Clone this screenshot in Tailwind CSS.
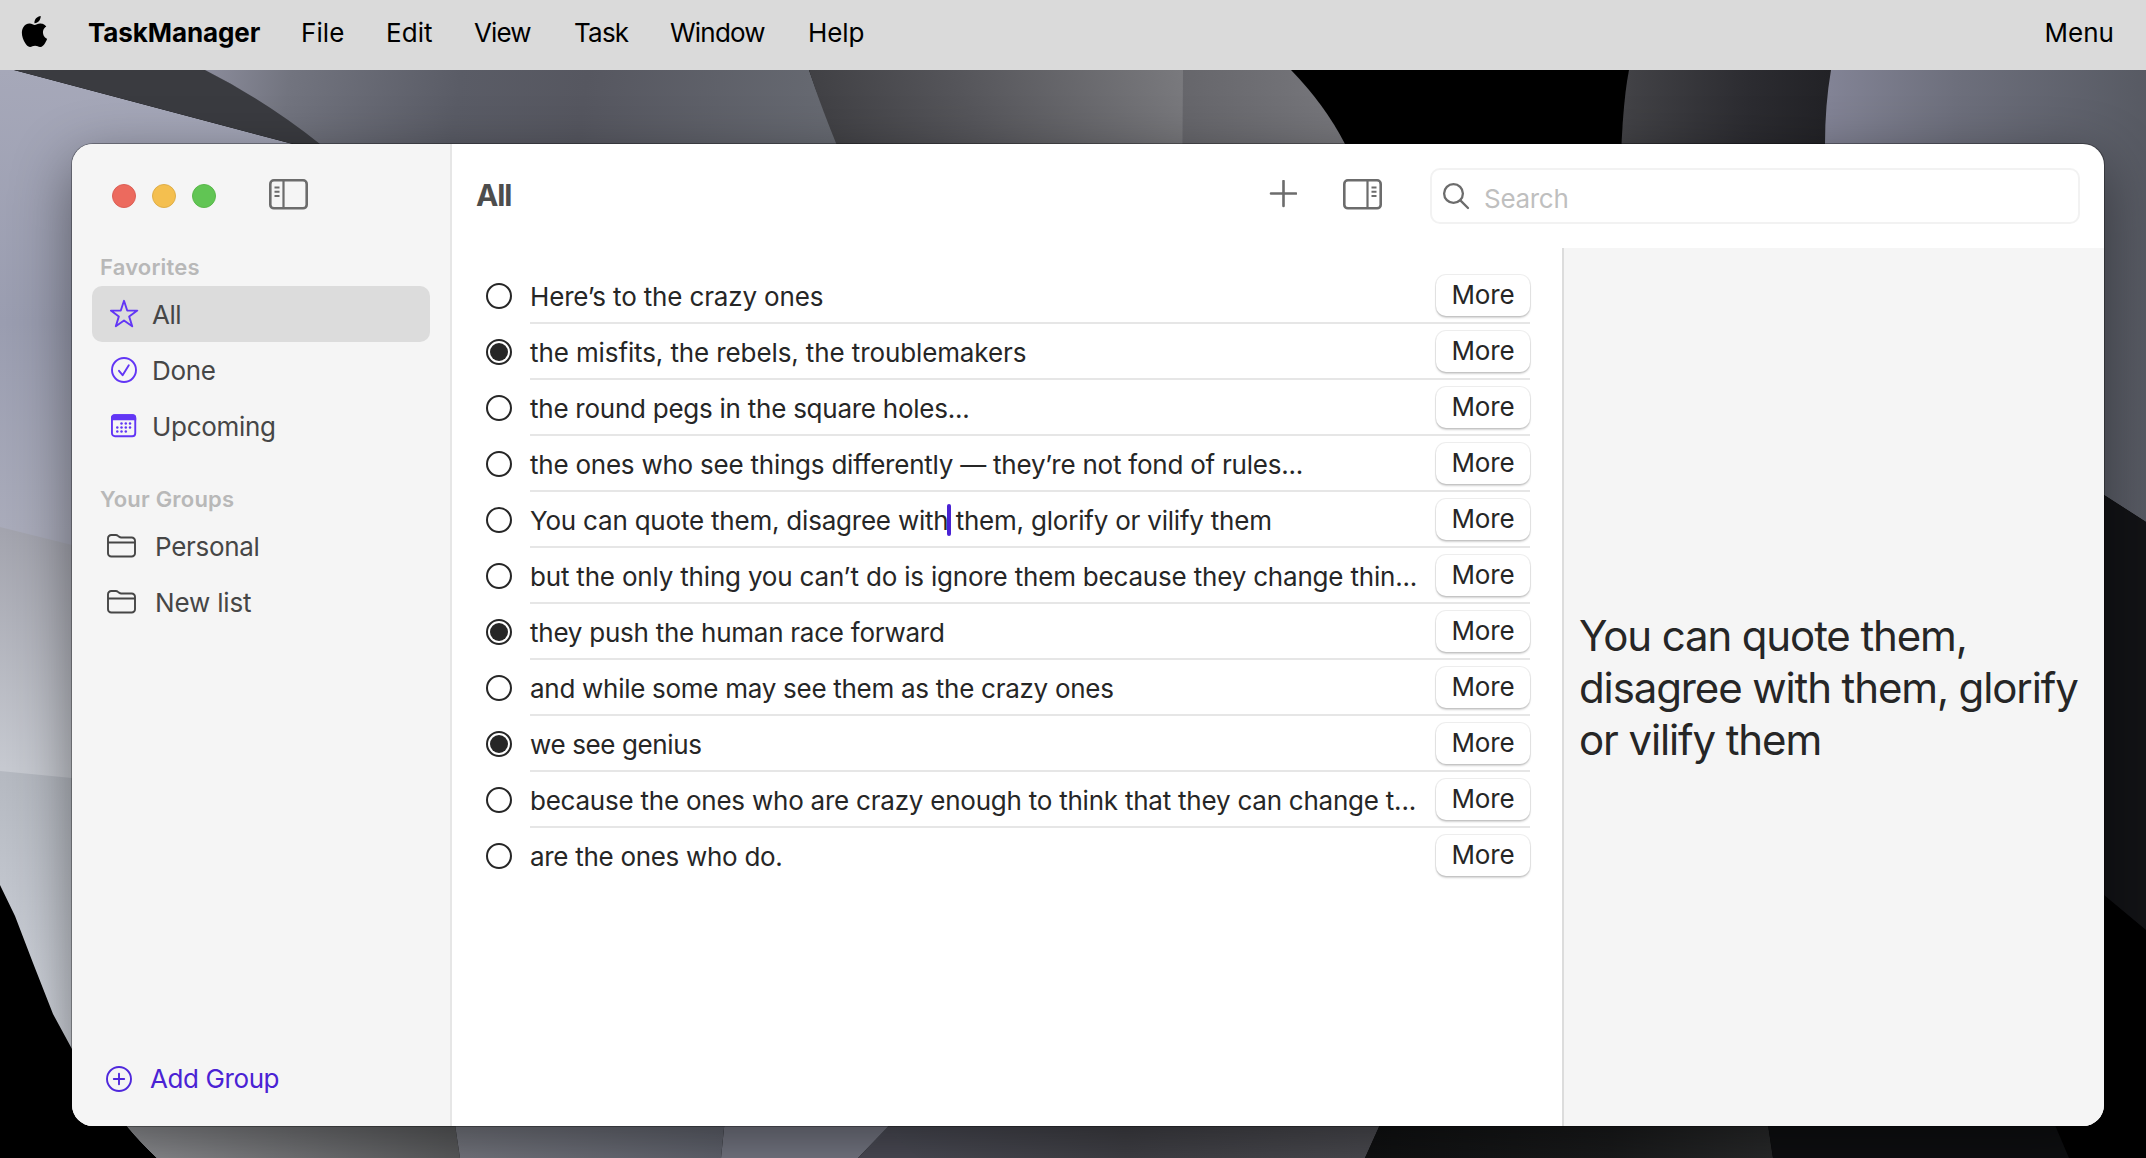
<!DOCTYPE html>
<html lang="en">
<head>
<meta charset="utf-8">
<title>TaskManager</title>
<script src="https://cdn.jsdelivr.net/npm/@tailwindcss/browser@4"></script>
</head>
<body class="relative flex h-[1158px] w-[2146px] flex-col overflow-hidden bg-black font-['Inter',sans-serif] text-[26px] leading-8 tracking-[-0.18px] text-[#262626]">

<!-- Desktop wallpaper -->
<svg class="absolute inset-0" width="2146" height="1158" viewBox="0 0 2146 1158" aria-hidden="true">
  <defs>
    <linearGradient id="lav" x1="0" y1="70" x2="0" y2="530" gradientUnits="userSpaceOnUse"><stop offset="0" stop-color="#a6a8b9"/><stop offset=".55" stop-color="#9a9db0"/><stop offset="1" stop-color="#a9abba"/></linearGradient>
    <linearGradient id="mid" x1="0" y1="530" x2="0" y2="775" gradientUnits="userSpaceOnUse"><stop offset="0" stop-color="#a3a4ae"/><stop offset="1" stop-color="#c7cad1"/></linearGradient>
    <linearGradient id="low" x1="0" y1="775" x2="0" y2="1050" gradientUnits="userSpaceOnUse"><stop offset="0" stop-color="#b5b9c1"/><stop offset="1" stop-color="#d2d6de"/></linearGradient>
    <linearGradient id="slate" x1="210" y1="60" x2="830" y2="150" gradientUnits="userSpaceOnUse"><stop offset="0" stop-color="#8a8b9a"/><stop offset=".13" stop-color="#72747f"/><stop offset=".4" stop-color="#5a5c66"/><stop offset=".6" stop-color="#565760"/><stop offset="1" stop-color="#676a72"/></linearGradient>
    <linearGradient id="char" x1="820" y1="144" x2="1180" y2="70" gradientUnits="userSpaceOnUse"><stop offset="0" stop-color="#404044"/><stop offset=".4" stop-color="#55555a"/><stop offset="1" stop-color="#79797d"/></linearGradient>
    <linearGradient id="fold" x1="1182" y1="0" x2="1345" y2="0" gradientUnits="userSpaceOnUse"><stop offset="0" stop-color="#66666b"/><stop offset="1" stop-color="#77777c"/></linearGradient>
    <linearGradient id="ink" x1="1622" y1="0" x2="1830" y2="0" gradientUnits="userSpaceOnUse"><stop offset="0" stop-color="#434347"/><stop offset=".6" stop-color="#2c2c31"/><stop offset="1" stop-color="#222226"/></linearGradient>
    <linearGradient id="haze" x1="1830" y1="0" x2="2146" y2="0" gradientUnits="userSpaceOnUse"><stop offset="0" stop-color="#828395"/><stop offset=".4" stop-color="#6d6f7c"/><stop offset="1" stop-color="#575a63"/></linearGradient>
    <linearGradient id="b1" x1="126" y1="0" x2="460" y2="0" gradientUnits="userSpaceOnUse"><stop offset="0" stop-color="#97989c"/><stop offset="1" stop-color="#5f6062"/></linearGradient>
    <linearGradient id="b2" x1="455" y1="0" x2="725" y2="0" gradientUnits="userSpaceOnUse"><stop offset="0" stop-color="#7d7f88"/><stop offset="1" stop-color="#666974"/></linearGradient>
    <linearGradient id="b3" x1="870" y1="0" x2="1382" y2="0" gradientUnits="userSpaceOnUse"><stop offset="0" stop-color="#50515c"/><stop offset=".5" stop-color="#44444a"/><stop offset="1" stop-color="#505056"/></linearGradient>
    <linearGradient id="b4" x1="1370" y1="0" x2="1770" y2="0" gradientUnits="userSpaceOnUse"><stop offset="0" stop-color="#111213"/><stop offset=".6" stop-color="#1b1c1d"/><stop offset="1" stop-color="#2b2c2d"/></linearGradient>
  </defs>
  <rect width="2146" height="1158" fill="#000"/>
  <path d="M0 66 14 70 293 144 293 600H0z" fill="url(#lav)"/>
  <path d="M0 527 72 545H300V800H0z" fill="url(#mid)"/>
  <path d="M0 771 72 778H300V1158H157Q138 1140 127 1126L90 1068L72 1049L53 1014L33 963L15 916L0 885z" fill="url(#low)"/>
  <path d="M14 70H206L340 144V160H350L293 144z" fill="#3a3b40"/>
  <path d="M205 70H809Q822 110 843 144V200H385L320 144Q266 101 205 70z" fill="url(#slate)"/>
  <path d="M809 70H1184V200H860Q825 120 809 70z" fill="url(#char)"/>
  <path d="M1183 70H1291Q1325 105 1345 144V200H1182z" fill="url(#fold)"/>
  <path d="M1629 70H1831V200H1620Q1621 110 1629 70z" fill="url(#ink)"/>
  <path d="M1831 70H2146V522L2104 495H1825V144Q1825 105 1831 70z" fill="url(#haze)"/>
  <path d="M2080 480 2104 495 2146 522V930L2104 895 2080 880z" fill="#121316"/>
  <path d="M120 1118H454L460 1158H157Q138 1140 120 1118z" fill="url(#b1)"/>
  <path d="M454 1118H725L721 1158H460z" fill="url(#b2)"/>
  <path d="M725 1118H897L858 1158H721z" fill="#7b7d8a"/>
  <path d="M896 1118H1383L1365 1158H858z" fill="url(#b3)"/>
  <path d="M889 1132 920 1158H858z" fill="#4f4f5a"/>
  <path d="M1383 1118H1767L1773 1158H1365z" fill="url(#b4)"/>
  <path d="M1767 1118H2052L2069 1158H1773z" fill="#0f1012"/>
</svg>

<!-- Menu bar -->
<header class="relative flex h-[70px] shrink-0 items-center bg-[#dadada] pr-[32px] pb-[4px] pl-[19px] text-black">
  <svg class="mr-[38px] -mt-[3px] shrink-0" width="31" height="31" viewBox="0 0 24 24" fill="#000"><path d="M12.152 6.896c-.948 0-2.415-1.078-3.96-1.04-2.04.027-3.91 1.183-4.961 3.014-2.117 3.675-.546 9.103 1.519 12.09 1.013 1.454 2.208 3.09 3.792 3.039 1.52-.065 2.09-.987 3.935-.987 1.831 0 2.35.987 3.96.948 1.637-.026 2.676-1.48 3.676-2.948 1.156-1.688 1.636-3.325 1.662-3.415-.039-.013-3.182-1.221-3.22-4.857-.026-3.04 2.48-4.494 2.597-4.559-1.429-2.09-3.623-2.324-4.39-2.376-2-.156-3.675 1.09-4.61 1.09zM15.53 3.83c.843-1.012 1.4-2.427 1.245-3.83-1.207.052-2.662.805-3.532 1.818-.78.896-1.454 2.338-1.273 3.714 1.338.104 2.715-.688 3.559-1.701"/></svg>
  <nav class="flex">
    <span class="w-[213px] font-bold tracking-[-0.1px]">TaskManager</span>
    <span class="w-[85px] tracking-[0.1px]">File</span>
    <span class="w-[88px] tracking-[0.05px]">Edit</span>
    <span class="w-[100px] tracking-[-0.9px]">View</span>
    <span class="w-[96px] tracking-[-0.8px]">Task</span>
    <span class="w-[138px] tracking-[-0.8px]">Window</span>
    <span class="tracking-[-0.1px]">Help</span>
  </nav>
  <span class="ml-auto tracking-normal">Menu</span>
</header>

<!-- Application window -->
<main class="relative mt-[74px] ml-[72px] flex h-[982px] w-[2032px] rounded-[21px] bg-white shadow-[0_0_0_1px_rgba(0,0,0,0.3),0_18px_60px_rgba(0,0,0,0.45)]">

  <aside class="flex w-[380px] shrink-0 flex-col rounded-l-[21px] border-r-2 border-[#e6e6e6] bg-[#f5f5f5] px-5 text-[#464646]">
    <div class="mt-[36px] flex h-[32px] items-center pl-5">
      <span class="mr-4 size-6 rounded-full border border-[#dc5f56] bg-[#ec6a5e]"></span>
      <span class="mr-4 size-6 rounded-full border border-[#dfae48] bg-[#f4bf4f]"></span>
      <span class="mr-[53px] size-6 rounded-full border border-[#59b84a] bg-[#61c554]"></span>
      <svg class="-mt-[4px]" width="39" height="31" viewBox="0 0 39 31" fill="none" stroke="#6c6c6c"><rect x="1.3" y="1.3" width="36.4" height="28" rx="3.6" stroke-width="2.6"/><path d="M14.5 1v28.500" stroke-width="2.200"/><path d="M5.500 8.500h5M5.500 12.800h5M5.500 17h5" stroke-width="2"/></svg>
    </div>
    <h2 class="mt-[39px] ml-2 h-8 text-[22px] font-semibold tracking-[0.18px] text-[#b8b8b8]">Favorites</h2>
    <ul class="mt-[3px]">
      <li class="flex h-14 items-center rounded-[10px] bg-[#dcdcdc] pl-[18px]">
        <svg class="mr-3 shrink-0" width="30" height="30" viewBox="0 0 30 30" fill="none" stroke="#6236f5" stroke-width="1.900" stroke-linejoin="round"><path d="M14.000 1.800 17.200 11.500 27.300 11.600 19.200 17.600 22.200 27.300 14.000 21.500 5.800 27.300 8.800 17.600 0.900 11.600 10.800 11.500z"/></svg>
        <span class="mt-[2px] tracking-[-0.5px]">All</span>
      </li>
      <li class="flex h-14 items-center pl-[18px]">
        <svg class="mr-3 shrink-0" width="30" height="30" viewBox="0 0 30 30" fill="none" stroke="#6236f5" stroke-width="1.900" stroke-linecap="round" stroke-linejoin="round"><circle cx="14" cy="15" r="12"/><path d="M9.000 15.800 12.600 20.200 18.800 10.200"/></svg>
        <span class="mt-[2px] tracking-[-0.3px]">Done</span>
      </li>
      <li class="flex h-14 items-center pl-[18px]">
        <svg class="mr-3 shrink-0" width="30" height="30" viewBox="0 0 30 30"><rect x="1.950" y="4.200" width="23.300" height="21" rx="3" fill="none" stroke="#6236f5" stroke-width="1.900"/><path d="M1 9.200V6.800a3.500 3.500 0 0 1 3.500-3.500h18.200a3.500 3.500 0 0 1 3.500 3.500v2.400z" fill="#6236f5"/><g fill="#6236f5"><circle cx="11.500" cy="12.600" r="1.250"/><circle cx="15.800" cy="12.600" r="1.250"/><circle cx="20" cy="12.600" r="1.250"/><circle cx="7.300" cy="16.600" r="1.250"/><circle cx="11.500" cy="16.600" r="1.250"/><circle cx="15.800" cy="16.600" r="1.250"/><circle cx="20" cy="16.600" r="1.250"/><circle cx="7.300" cy="20.600" r="1.250"/><circle cx="11.500" cy="20.600" r="1.250"/><circle cx="15.800" cy="20.600" r="1.250"/></g></svg>
        <span class="mt-[2px] tracking-[-0.3px]">Upcoming</span>
      </li>
    </ul>
    <h2 class="mt-[29px] ml-2 h-8 text-[22px] font-semibold tracking-[0.2px] text-[#b8b8b8]">Your Groups</h2>
    <ul class="mt-[3px]">
      <li class="flex h-14 items-center pl-[15px]">
        <svg class="mr-[18px] shrink-0" width="30" height="24" viewBox="0 0 30 24" fill="none" stroke="#464646" stroke-width="1.900" stroke-linejoin="round"><path d="M1 4.300A3.300 3.300 0 0 1 4.300 1h4.500c1 0 1.600.3 2.300.9l1.100.9c.6.500 1.200.700 2 .7h10.500A3.300 3.300 0 0 1 28 6.800v12.400a3.300 3.300 0 0 1-3.300 3.300H4.300A3.300 3.300 0 0 1 1 19.200zM1 8.500h27"/></svg>
        <span class="mt-[2px] tracking-[-0.3px]">Personal</span>
      </li>
      <li class="flex h-14 items-center pl-[15px]">
        <svg class="mr-[18px] shrink-0" width="30" height="24" viewBox="0 0 30 24" fill="none" stroke="#464646" stroke-width="1.900" stroke-linejoin="round"><path d="M1 4.300A3.300 3.300 0 0 1 4.300 1h4.500c1 0 1.600.3 2.300.9l1.100.9c.6.500 1.200.700 2 .7h10.500A3.300 3.300 0 0 1 28 6.800v12.400a3.300 3.300 0 0 1-3.300 3.300H4.300A3.300 3.300 0 0 1 1 19.200zM1 8.500h27"/></svg>
        <span class="mt-[2px] tracking-[-0.17px]">New list</span>
      </li>
    </ul>
    <button class="mt-auto mb-[31px] flex items-center gap-[17px] pl-[13px] text-left text-[#4a22d4]">
      <svg width="28" height="28" viewBox="0 0 28 28" fill="none" stroke="#4f28dc" stroke-width="1.900" stroke-linecap="round"><circle cx="14" cy="14" r="12"/><path d="M14 8.800v10.400M8.800 14h10.400"/></svg>
      <span class="tracking-[-0.4px]">Add Group</span>
    </button>
  </aside>

  <div class="flex min-w-0 flex-1 flex-col">
    <div class="flex h-[104px] shrink-0 items-center pr-6 pl-6">
      <h1 class="-mt-[3px] text-[30px] font-bold tracking-[-1.2px] text-[#4d4d4d]">All</h1>
      <svg class="-mt-[4px] ml-auto mr-[46px]" width="28" height="28" viewBox="0 0 28 28" stroke="#6c6c6c" stroke-width="2.600" stroke-linecap="round"><path d="M14.500 1v25M2 13.500h25"/></svg>
      <svg class="-mt-[4px] mr-[48px]" width="39" height="31" viewBox="0 0 39 31" fill="none" stroke="#6c6c6c"><rect x="1.300" y="1.300" width="36.400" height="28" rx="3.600" stroke-width="2.600"/><path d="M24.500 1v28.500" stroke-width="2.200"/><path d="M28.500 8.500h5M28.500 12.800h5M28.500 17h5" stroke-width="2"/></svg>
      <label class="flex h-14 w-[650px] items-center rounded-[10px] border-2 border-[#f2f2f2] pl-[10px]">
        <svg class="mr-[14px]" width="28" height="28" viewBox="0 0 28 28" fill="none" stroke="#6c6c6c" stroke-width="2.300" stroke-linecap="round"><circle cx="11.500" cy="11.500" r="9.400"/><path d="M18.600 18.600 26 26"/></svg>
        <span class="mt-[5px] tracking-[-0.3px] text-[#bfbfbf]">Search</span>
      </label>
    </div>

    <div class="flex min-h-0 flex-1">
      <ul id="tasks" class="w-[1110px] shrink-0 pt-5 pr-8 pl-8"></ul>
      <section class="flex flex-1 items-center rounded-br-[21px] border-l-2 border-[#dcdcdc] bg-[#f5f5f5] pl-[15px]">
        <p class="mt-px text-[42px] leading-[52px] tracking-[-1.12px] whitespace-nowrap">You can quote them,<br>disagree with them, glorify<br>or vilify them</p>
      </section>
    </div>
  </div>
</main>

<script>
const tasks = [
  ['Here’s to the crazy ones', false, -0.16],
  ['the misfits, the rebels, the troublemakers', true, -0.11],
  ['the round pegs in the square holes...', false, -0.25],
  ['the ones who see things differently — they’re not fond of rules...', false, -0.23],
  ['You can quote them, disagree with| them, glorify or vilify them', false, -0.21],
  ['but the only thing you can’t do is ignore them because they change thin...', false, -0.19],
  ['they push the human race forward', true, -0.25],
  ['and while some may see them as the crazy ones', false, -0.28],
  ['we see genius', true, -0.38],
  ['because the ones who are crazy enough to think that they can change t...', false, -0.23],
  ['are the ones who do.', false, -0.3],
];
const caret = '<span class="relative"><i class="absolute top-[-1px] left-[-2px] h-8 w-1 rounded-full bg-[#4a22d4]"></i></span>';
document.getElementById('tasks').innerHTML = tasks.map(([text, done, spacing], i) => `
  <li class="flex h-14 items-center">
    <svg class="mr-[18px] shrink-0" width="28" height="28" viewBox="0 0 28 28"><circle cx="15" cy="14" r="12" fill="none" stroke="#262626" stroke-width="2"/>${done ? '<circle cx="15" cy="14" r="9" fill="#262626"/>' : ''}</svg>
    <div class="flex h-14 min-w-0 flex-1 items-center justify-between border-b-2 ${i < tasks.length - 1 ? 'border-[#e6e6e6]' : 'border-transparent'}">
      <span class="mt-[4px] whitespace-nowrap" style="letter-spacing:${spacing}px">${text.replace('|', caret)}</span>
      <button class="h-[41px] w-[94px] shrink-0 rounded-[10px] bg-white tracking-[-0.14px] shadow-[0_0_0_1px_rgba(0,0,0,0.07),0_2px_2px_rgba(0,0,0,0.18)]">More</button>
    </div>
  </li>`).join('');
</script>
</body>
</html>
